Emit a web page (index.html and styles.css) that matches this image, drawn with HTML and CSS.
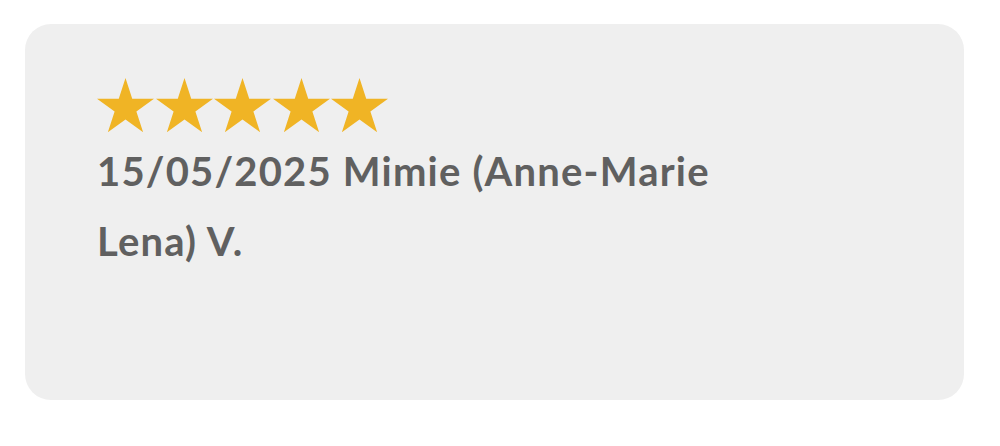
FILE: index.html
```html
<!DOCTYPE html>
<html lang="fr">
<head>
<meta charset="utf-8">
<title>Avis</title>
<link rel="stylesheet" href="styles.css">
</head>
<body>
<div class="card">
  <div class="stars" aria-label="5 étoiles sur 5">
    <svg class="star" viewBox="0 0 56 53.3"><polygon points="28,0 34.61,20.34 56,20.34 38.70,32.92 45.31,53.26 28,40.69 10.69,53.26 17.30,32.92 0,20.34 21.39,20.34"/></svg>
    <svg class="star" viewBox="0 0 56 53.3"><polygon points="28,0 34.61,20.34 56,20.34 38.70,32.92 45.31,53.26 28,40.69 10.69,53.26 17.30,32.92 0,20.34 21.39,20.34"/></svg>
    <svg class="star" viewBox="0 0 56 53.3"><polygon points="28,0 34.61,20.34 56,20.34 38.70,32.92 45.31,53.26 28,40.69 10.69,53.26 17.30,32.92 0,20.34 21.39,20.34"/></svg>
    <svg class="star" viewBox="0 0 56 53.3"><polygon points="28,0 34.61,20.34 56,20.34 38.70,32.92 45.31,53.26 28,40.69 10.69,53.26 17.30,32.92 0,20.34 21.39,20.34"/></svg>
    <svg class="star" viewBox="0 0 56 53.3"><polygon points="28,0 34.61,20.34 56,20.34 38.70,32.92 45.31,53.26 28,40.69 10.69,53.26 17.30,32.92 0,20.34 21.39,20.34"/></svg>
  </div>
  <p class="author">15/05/2025 Mimie (Anne-Marie Lena) V.</p>
</div>
</body>
</html>
```
FILE: styles.css
```css
html, body {
  margin: 0;
  padding: 0;
  background: #ffffff;
}
body {
  padding: 24px 36px 0 25px;
  font-family: "Lato", "Open Sans", sans-serif;
}
.card {
  background: #efefef;
  border-radius: 26px;
  height: 376px;
  box-sizing: border-box;
  padding: 54px 72px 0 72px;
}
.stars {
  display: flex;
  gap: 1.5px;
  height: 55px;
}
.star {
  width: 57px;
  height: 54.3px;
  fill: #f0b425;
  display: block;
}
.author {
  margin: 3px 0 0 0;
  max-width: 680px;
  font-size: 40px;
  font-weight: 700;
  letter-spacing: 1.2px;
  line-height: 70px;
  color: #606060;
}
```
